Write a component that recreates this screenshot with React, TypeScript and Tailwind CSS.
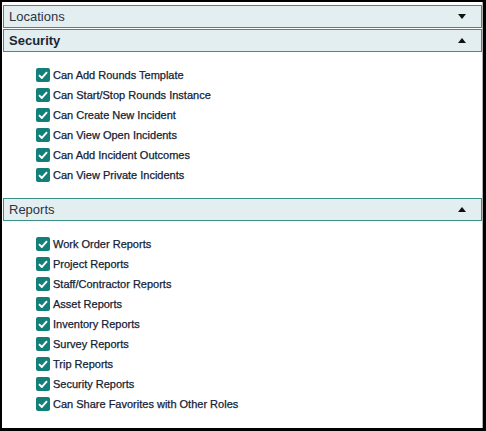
import React from 'react';

const security = [
  'Can Add Rounds Template',
  'Can Start/Stop Rounds Instance',
  'Can Create New Incident',
  'Can View Open Incidents',
  'Can Add Incident Outcomes',
  'Can View Private Incidents',
];

const reports = [
  'Work Order Reports',
  'Project Reports',
  'Staff/Contractor Reports',
  'Asset Reports',
  'Inventory Reports',
  'Survey Reports',
  'Trip Reports',
  'Security Reports',
  'Can Share Favorites with Other Roles',
];

const Caret: React.FC<{ up?: boolean }> = ({ up }) => (
  <svg width="8" height="5" viewBox="0 0 8 5" className="mr-[15px]">
    {up ? <polygon points="0,5 8,5 4,0" fill="#111" /> : <polygon points="0,0 8,0 4,5" fill="#111" />}
  </svg>
);

const Header: React.FC<{ title: string; up?: boolean; bold?: boolean }> = ({ title, up, bold }) => (
  <div className="flex h-[23px] items-center justify-between border border-[#3a8f8b] bg-[#e3eef0] pl-[5px]">
    <span className={`text-[13px] ${bold ? 'font-bold text-[#1d2633]' : 'text-[#2b3440]'}`}>{title}</span>
    <Caret up={up} />
  </div>
);

const Check: React.FC<{ label: string }> = ({ label }) => (
  <label className="flex h-[20px] items-center gap-[3px]">
    <span className="flex h-[14px] w-[14px] items-center justify-center rounded-[2px] bg-[#127f79]">
      <svg width="10" height="8" viewBox="0 0 10 8">
        <path d="M1 4.2 L3.8 7 L9 1.2" fill="none" stroke="#fff" strokeWidth="1.9" />
      </svg>
    </span>
    <span className="text-[11px] text-[#142235] [-webkit-text-stroke:0.25px_#142235]">{label}</span>
  </label>
);

export default function App() {
  return (
    <div
      className="h-[431px] w-[486px] border-t-2 border-l-2 border-r-[3px] border-b-[3px] border-black bg-white"
      style={{ fontFamily: '"Liberation Sans", Arial, sans-serif' }}
    >
      <div className="flex h-full flex-col border-r border-[#b0b0b0] pt-[3px] pl-px">
        <Header title="Locations" />
        <div className="mt-px">
          <Header title="Security" up bold />
        </div>
        <div className="flex flex-col pl-[33px] pt-[13px] pb-[13px]">
          {security.map((s) => (
            <Check key={s} label={s} />
          ))}
        </div>
        <Header title="Reports" up />
        <div className="flex flex-col pl-[33px] pt-[13px]">
          {reports.map((s) => (
            <Check key={s} label={s} />
          ))}
        </div>
      </div>
    </div>
  );
}
